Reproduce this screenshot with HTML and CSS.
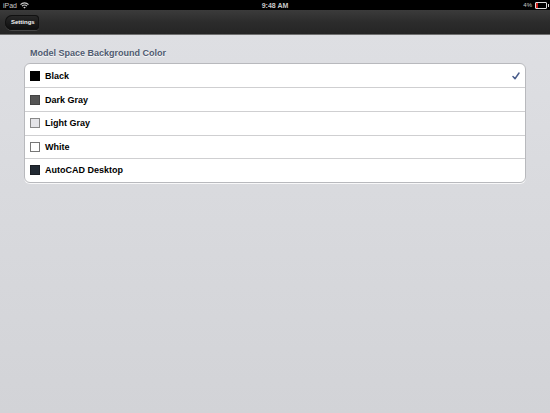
FILE: index.html
```html
<!DOCTYPE html>
<html>
<head>
<meta charset="utf-8">
<link rel="stylesheet" href="styles.css">
</head>
<body>
<div class="status">
  <div class="st-left">
    <span>iPad</span>
    <svg class="wifi" width="9" height="7" viewBox="0 0 9 7"><path d="M0.5 2.6 A5.5 5.5 0 0 1 8.5 2.6" stroke="#ccc" stroke-width="1.1" fill="none"/><path d="M2 4.1 A3.4 3.4 0 0 1 7 4.1" stroke="#ccc" stroke-width="1.1" fill="none"/><path d="M4.5 6.6 L3.3 5.4 A1.7 1.7 0 0 1 5.7 5.4 Z" fill="#ccc"/></svg>
  </div>
  <div class="st-time">9:48 AM</div>
  <div class="st-right">
    <span>4%</span>
    <span class="battery"><span class="level"></span></span>
  </div>
</div>
<div class="navbar">
  <div class="back">Settings</div>
</div>
<div class="content">
  <div class="section-title">Model Space Background Color</div>
  <div class="table">
    <div class="row"><span class="sw black"></span><span class="label">Black</span><svg class="check" width="8" height="8" viewBox="0 0 8 8"><path d="M1 4.6 L3 6.8 L7 1" stroke="#4b5e8c" stroke-width="1.5" fill="none" stroke-linecap="round" stroke-linejoin="round"/></svg></div>
    <div class="row"><span class="sw dark"></span><span class="label">Dark Gray</span></div>
    <div class="row"><span class="sw light"></span><span class="label">Light Gray</span></div>
    <div class="row"><span class="sw white"></span><span class="label">White</span></div>
    <div class="row"><span class="sw acad"></span><span class="label">AutoCAD Desktop</span></div>
  </div>
</div>
</body>
</html>
```
FILE: styles.css
```css
html, body {
  margin: 0;
  padding: 0;
  width: 550px;
  height: 413px;
  overflow: hidden;
  font-family: "Liberation Sans", Arial, sans-serif;
}
body {
  display: flex;
  flex-direction: column;
  background: linear-gradient(#dfe0e4, #d2d3d7);
}
.status {
  height: 10px;
  background: #000;
  color: #c9c9c9;
  font-size: 7px;
  display: flex;
  align-items: center;
  justify-content: space-between;
  padding: 0 3px 0 3px;
  position: relative;
}
.st-left { display: flex; align-items: center; gap: 3px; }
.st-time {
  position: absolute;
  left: 0; right: 0;
  text-align: center;
  font-weight: bold;
  font-size: 7px;
}
.st-right { display: flex; align-items: center; gap: 3px; font-size: 6px; }
.battery {
  width: 10px;
  height: 5px;
  border: 1px solid #ddd;
  border-radius: 1px;
  display: flex;
  position: relative;
}
.battery::after {
  content: "";
  position: absolute;
  right: -3px;
  top: 1px;
  width: 1px;
  height: 3px;
  background: #ddd;
}
.level { width: 2px; height: 5px; background: #d0201a; }
.navbar {
  height: 24px;
  background: linear-gradient(#3b3b3b, #2c2c2c 50%, #252525);
  border-bottom: 1px solid #6f6f6f;
  display: flex;
  align-items: center;
  padding-left: 5px;
}
.back {
  height: 15px;
  padding: 0 4px 0 6px;
  line-height: 15px;
  font-size: 6px;
  font-weight: bold;
  color: #f4f4f4;
  background: linear-gradient(#2a2a2a, #0d0d0d);
  border-radius: 7px 4px 4px 7px;
  box-shadow: 0 1px 0 rgba(255,255,255,0.15), inset 0 0 0 1px #111;
}
.content {
  padding: 13px 24px 0 24px;
}
.section-title {
  font-size: 9px;
  font-weight: bold;
  color: #4f5a70;
  padding-left: 6px;
  height: 15px;
  line-height: 11px;
  text-shadow: 0 1px 0 rgba(255,255,255,0.8);
}
.table {
  background: #fff;
  border: 1px solid #b8b9bd;
  border-radius: 6px;
  box-shadow: 0 1px 0 rgba(255,255,255,0.8);
  overflow: hidden;
}
.row {
  height: 22.6px;
  display: flex;
  align-items: center;
  padding-left: 5px;
  border-top: 1px solid #cfcfd1;
  position: relative;
}
.row:first-child { border-top: none; height: 23.4px; }
.sw {
  width: 8px;
  height: 8px;
  border: 1px solid #777;
  margin-right: 5px;
}
.sw.black { background: #000; border-color: #000; }
.sw.dark { background: #555; border-color: #444; }
.sw.light { background: #e4e4e8; border-color: #888; }
.sw.white { background: #fff; border-color: #777; }
.sw.acad { background: #222a33; border-color: #1a1e24; }
.label {
  font-size: 9px;
  font-weight: bold;
  color: #000;
}
.check {
  position: absolute;
  right: 5px;
  top: 8px;
}
```
